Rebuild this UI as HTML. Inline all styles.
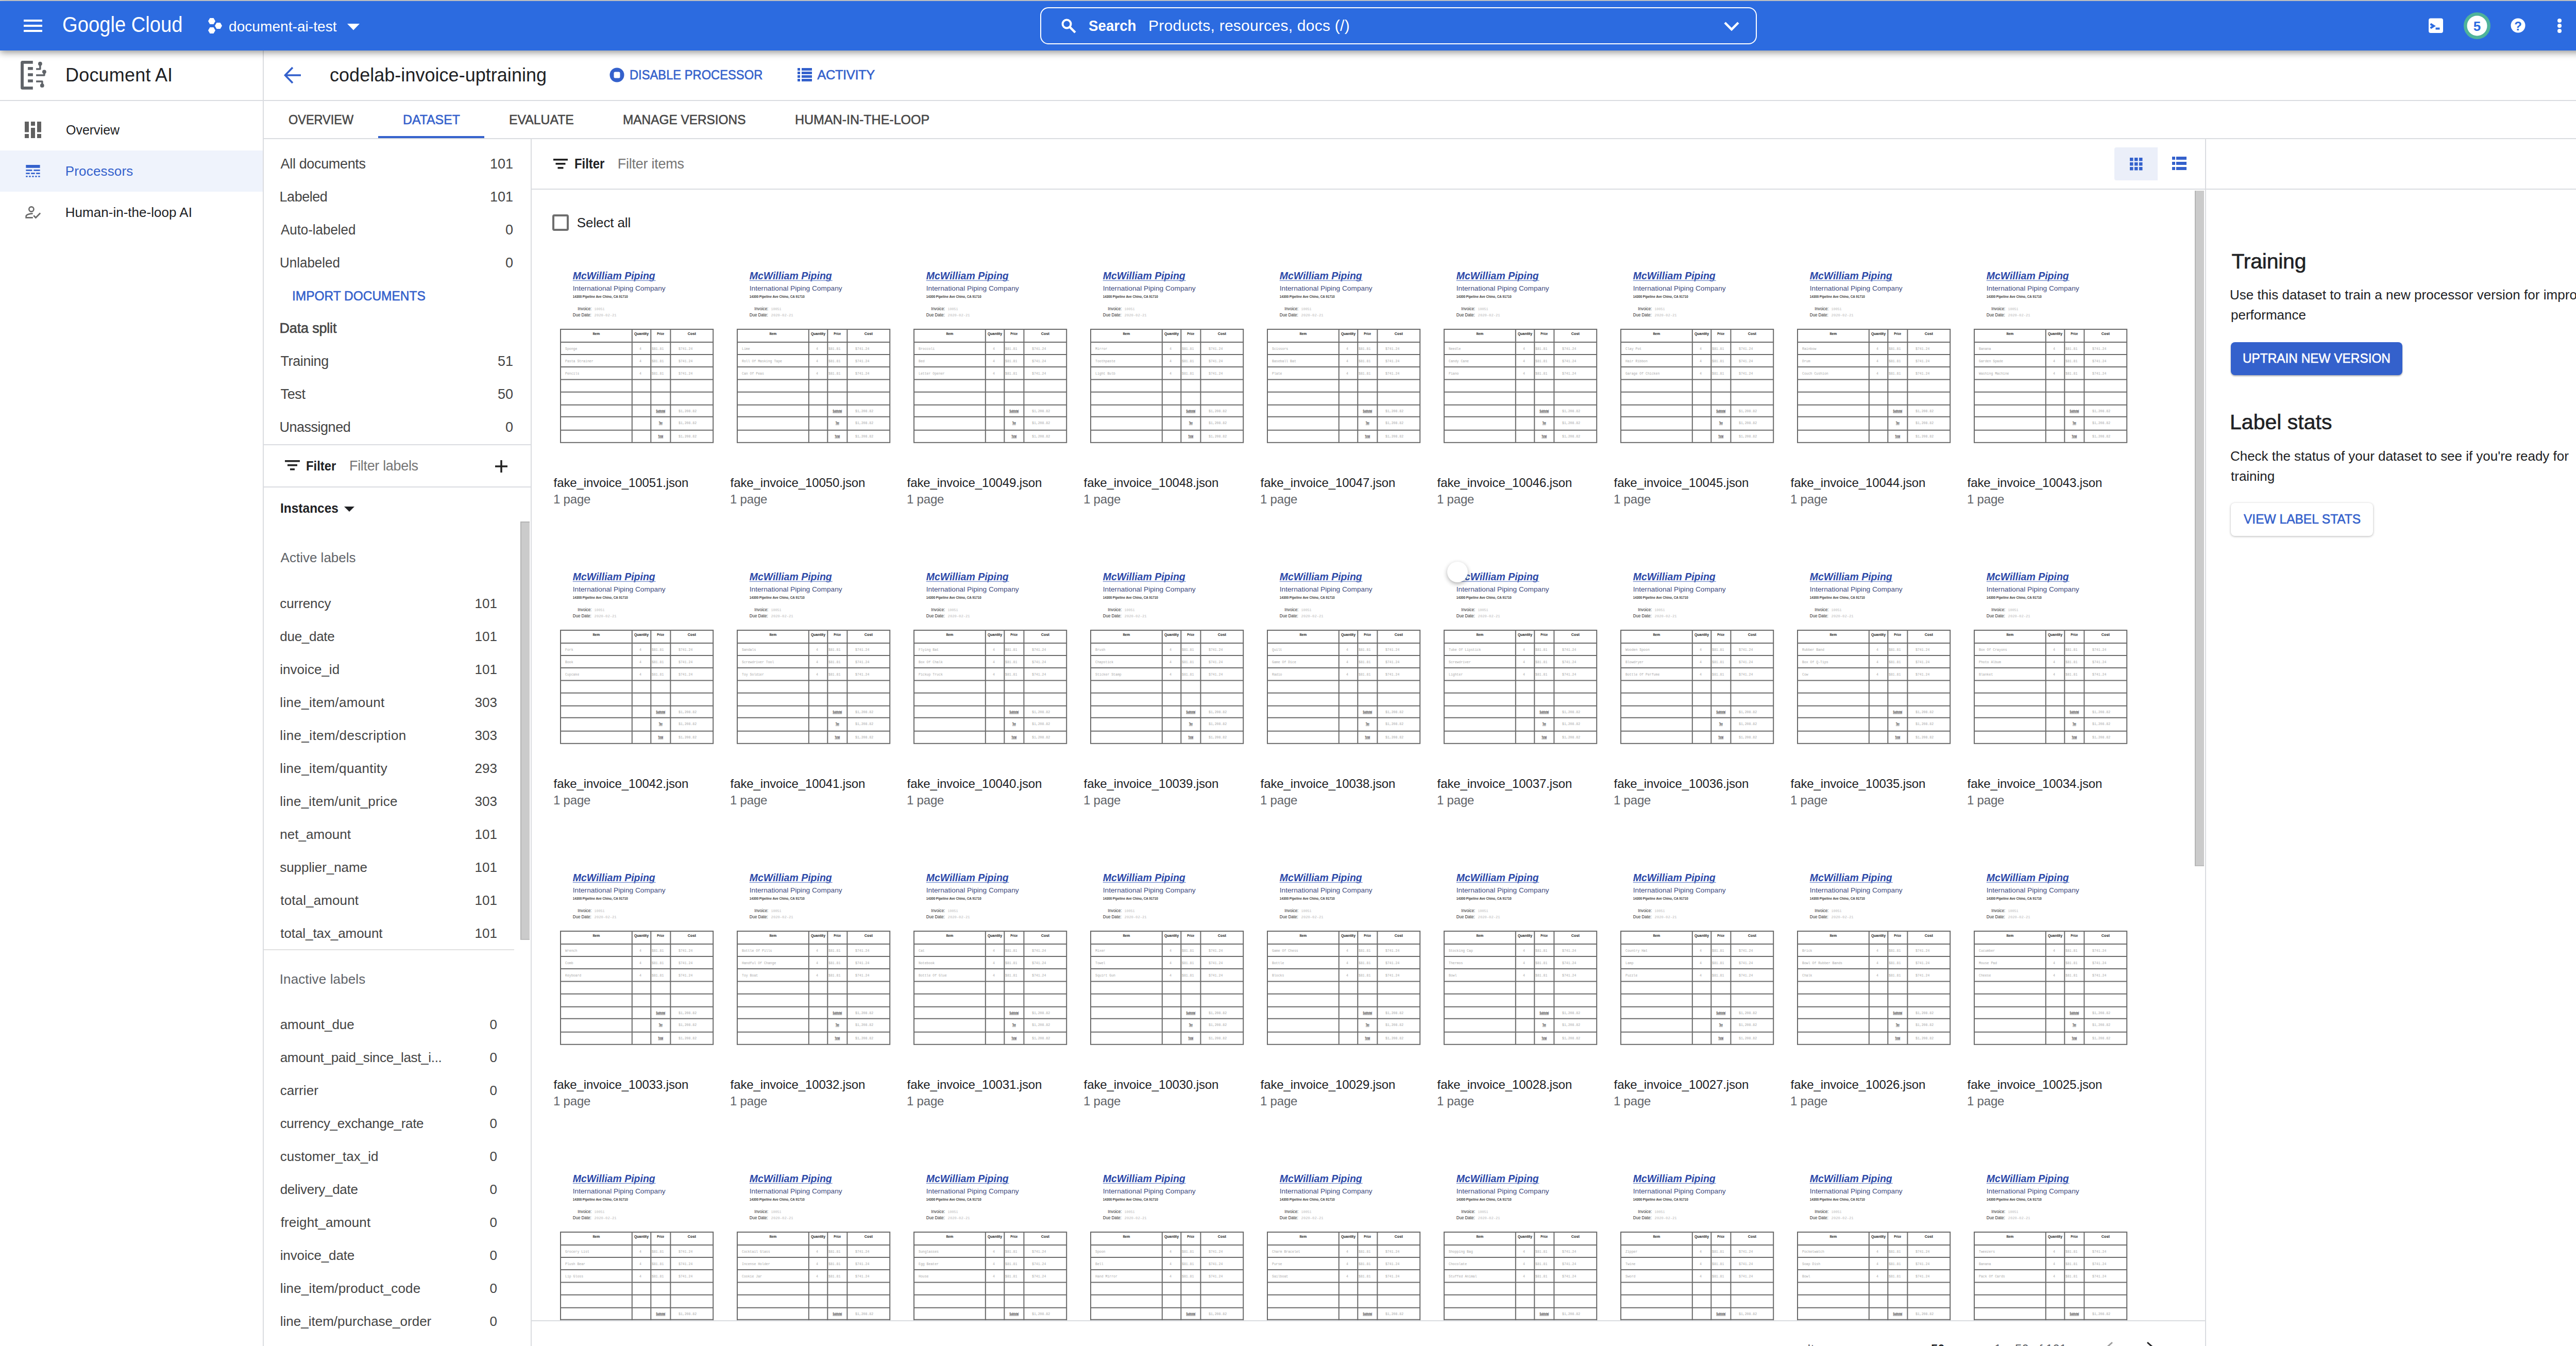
<!DOCTYPE html>
<html><head><meta charset="utf-8"><title>Document AI</title>
<style>
html,body{margin:0;padding:0;background:#fff;}
body{width:5120px;height:2612px;overflow:hidden;position:relative;font-family:"Liberation Sans",sans-serif;}
.t{position:absolute;white-space:nowrap;}
.r{position:absolute;}
@media (max-width:2600px){body{zoom:0.5;}}

</style></head><body>
<svg width="0" height="0" style="position:absolute"><defs><symbol id="inv" overflow="visible"><text x="23.7" y="-97" font-family="Liberation Sans" font-weight="700" font-style="italic" font-size="19.5" fill="#2b48a8" textLength="160" lengthAdjust="spacingAndGlyphs">McWilliam Piping</text><rect x="23.7" y="-95.3" width="161" height="1.4" fill="#7f95d0"/><text x="23.7" y="-74.8" font-family="Liberation Sans" font-size="13" fill="#3f4c80" textLength="180" lengthAdjust="spacingAndGlyphs">International Piping Company</text><text x="23.7" y="-60.6" font-family="Liberation Sans" font-size="7.5" font-weight="700" fill="#3a3a3a" textLength="107" lengthAdjust="spacingAndGlyphs">14300 Pipeline Ave Chino, CA 91710</text><text x="33.3" y="-37.2" font-family="Liberation Sans" font-size="8.5" fill="#2a2a2a" textLength="27" lengthAdjust="spacingAndGlyphs">Invoice:</text><text x="65.6" y="-37.2" font-family="Liberation Mono" font-size="8" fill="#bbb" textLength="20" lengthAdjust="spacingAndGlyphs">10051</text><text x="23.7" y="-25.4" font-family="Liberation Sans" font-size="8.5" fill="#2a2a2a" textLength="36" lengthAdjust="spacingAndGlyphs">Due Date:</text><text x="65.6" y="-25.4" font-family="Liberation Mono" font-size="8" fill="#bbb" textLength="43" lengthAdjust="spacingAndGlyphs">2020-02-21</text><g stroke="#6a6a6a" stroke-width="2" fill="none"><rect x="0" y="0" width="296.2" height="219.8"/><line x1="0" y1="24.9" x2="296.2" y2="24.9"/><line x1="0" y1="49" x2="296.2" y2="49"/><line x1="0" y1="73" x2="296.2" y2="73"/><line x1="0" y1="97.4" x2="296.2" y2="97.4"/><line x1="0" y1="121.8" x2="296.2" y2="121.8"/><line x1="0" y1="146.7" x2="296.2" y2="146.7"/><line x1="0" y1="169.8" x2="296.2" y2="169.8"/><line x1="0" y1="195.7" x2="296.2" y2="195.7"/><line x1="138.8" y1="0" x2="138.8" y2="219.8"/><line x1="175.3" y1="0" x2="175.3" y2="219.8"/><line x1="213.4" y1="0" x2="213.4" y2="219.8"/></g><text x="69.4" y="11" text-anchor="middle" font-family="Liberation Sans" font-weight="700" font-size="6.5" fill="#222" textLength="14" lengthAdjust="spacingAndGlyphs">Item</text><text x="157" y="11" text-anchor="middle" font-family="Liberation Sans" font-weight="700" font-size="6.5" fill="#222" textLength="28" lengthAdjust="spacingAndGlyphs">Quantity</text><text x="194.3" y="11" text-anchor="middle" font-family="Liberation Sans" font-weight="700" font-size="6.5" fill="#222" textLength="14" lengthAdjust="spacingAndGlyphs">Price</text><text x="254.8" y="11" text-anchor="middle" font-family="Liberation Sans" font-weight="700" font-size="6.5" fill="#222" textLength="16" lengthAdjust="spacingAndGlyphs">Cost</text><text x="153" y="39.9" font-family="Liberation Mono" font-size="6.5" fill="#aaa">4</text><text x="177" y="39.9" font-family="Liberation Mono" font-size="6.5" fill="#aaa">$81.81</text><text x="229" y="39.9" font-family="Liberation Mono" font-size="6.5" fill="#aaa">$741.24</text><text x="153" y="64" font-family="Liberation Mono" font-size="6.5" fill="#aaa">4</text><text x="177" y="64" font-family="Liberation Mono" font-size="6.5" fill="#aaa">$81.81</text><text x="229" y="64" font-family="Liberation Mono" font-size="6.5" fill="#aaa">$741.24</text><text x="153" y="88" font-family="Liberation Mono" font-size="6.5" fill="#aaa">4</text><text x="177" y="88" font-family="Liberation Mono" font-size="6.5" fill="#aaa">$81.81</text><text x="229" y="88" font-family="Liberation Mono" font-size="6.5" fill="#aaa">$741.24</text><text x="194.3" y="160.7" text-anchor="middle" font-family="Liberation Sans" font-weight="700" font-size="6.5" fill="#444" text-decoration="underline" textLength="18" lengthAdjust="spacingAndGlyphs">Subtotal</text><text x="229" y="160.7" font-family="Liberation Mono" font-size="6.5" fill="#aaa">$1,208.82</text><text x="194.3" y="183.8" text-anchor="middle" font-family="Liberation Sans" font-weight="700" font-size="6.5" fill="#444" text-decoration="underline" textLength="7" lengthAdjust="spacingAndGlyphs">Tax</text><text x="229" y="183.8" font-family="Liberation Mono" font-size="6.5" fill="#aaa">$1,208.82</text><text x="194.3" y="209.7" text-anchor="middle" font-family="Liberation Sans" font-weight="700" font-size="6.5" fill="#444" text-decoration="underline" textLength="10" lengthAdjust="spacingAndGlyphs">Total</text><text x="229" y="209.7" font-family="Liberation Mono" font-size="6.5" fill="#aaa">$1,208.82</text></symbol></defs></svg>
<div class="r" style="left:0px;top:0px;width:5120px;height:2px;background:#d4d4d4;"></div><div class="r" style="left:0px;top:2px;width:5120px;height:96px;background:#2c6be0;box-shadow:0 4px 13px rgba(0,0,0,.42);z-index:5"></div><div class="r" style="left:46px;top:38px;width:36px;height:4px;background:#fff;z-index:6"></div><div class="r" style="left:46px;top:48px;width:36px;height:4px;background:#fff;z-index:6"></div><div class="r" style="left:46px;top:58px;width:36px;height:4px;background:#fff;z-index:6"></div><div class="t" style="left:121.22px;top:25.60px;font-size:43px;line-height:43px;color:#fff;font-weight:400;letter-spacing:0.000px;z-index:6;transform:scaleX(0.8880);transform-origin:0 0">Google Cloud</div><svg class="r" style="left:402px;top:34px;z-index:6" width="32" height="32" viewBox="0 0 32 32"><polygon points="16.00,7.00 12.50,13.06 5.50,13.06 2.00,7.00 5.50,0.94 12.50,0.94" fill="#fff"/><polygon points="29.00,16.00 25.50,22.06 18.50,22.06 15.00,16.00 18.50,9.94 25.50,9.94" fill="#fff"/><polygon points="16.00,25.00 12.50,31.06 5.50,31.06 2.00,25.00 5.50,18.94 12.50,18.94" fill="#fff"/></svg><div class="t" style="left:444.00px;top:37.60px;font-size:28px;line-height:28px;color:#fff;font-weight:400;letter-spacing:0.067px;z-index:6">document-ai-test</div><svg class="r" style="left:674px;top:46px;z-index:6" width="24" height="13" viewBox="0 0 24 13"><polygon points="0,0 24,0 12,12.5" fill="#fff"/></svg><div class="r" style="left:2019px;top:14px;width:1391px;height:72px;background:transparent;box-sizing:border-box;border:2px solid #fff;border-radius:16px;z-index:6"></div><svg class="r" style="left:2058px;top:34px;z-index:6" width="32" height="32" viewBox="0 0 32 32"><circle cx="12.5" cy="12.5" r="8" fill="none" stroke="#fff" stroke-width="4"/><line x1="18.5" y1="18.5" x2="29" y2="29" stroke="#fff" stroke-width="4.5"/></svg><div class="t" style="left:2113.08px;top:34.61px;font-size:30px;line-height:30px;color:#fff;font-weight:700;letter-spacing:0.000px;z-index:6;transform:scaleX(0.9245);transform-origin:0 0">Search</div><div class="t" style="left:2229.00px;top:34.61px;font-size:30px;line-height:30px;color:#fff;font-weight:400;letter-spacing:0.257px;z-index:6">Products, resources, docs (/)</div><svg class="r" style="left:3345px;top:40px;z-index:6" width="32" height="22" viewBox="0 0 32 22"><polyline points="3,4 16,17 29,4" fill="none" stroke="#fff" stroke-width="4.5"/></svg><svg class="r" style="left:4713px;top:35px;z-index:6" width="30" height="30" viewBox="0 0 30 30"><rect x="1" y="0.5" width="28" height="28.5" rx="4" fill="#fff"/><polyline points="4.5,11.5 11,15.5 4.5,19.5" fill="none" stroke="#2c6be0" stroke-width="4"/><rect x="14.5" y="18.5" width="8" height="4" fill="#2c6be0"/></svg><svg class="r" style="left:4782px;top:24px;z-index:6" width="52" height="52" viewBox="0 0 52 52"><circle cx="26" cy="26" r="26" fill="#4fb39a"/><circle cx="26" cy="26" r="19.5" fill="#fff"/><text x="26" y="35.5" text-anchor="middle" font-family="Liberation Sans" font-weight="700" font-size="26" fill="#2c6be0">5</text></svg><svg class="r" style="left:4873px;top:35px;z-index:6" width="30" height="30" viewBox="0 0 30 30"><circle cx="14.5" cy="14.5" r="14" fill="#fff"/><text x="14.5" y="23.5" text-anchor="middle" font-family="Liberation Sans" font-weight="700" font-size="24" fill="#2c6be0">?</text></svg><svg class="r" style="left:4960px;top:34px;z-index:6" width="16" height="32" viewBox="0 0 16 32"><circle cx="8" cy="6" r="4" fill="#fff"/><circle cx="8" cy="16" r="4" fill="#fff"/><circle cx="8" cy="26" r="4" fill="#fff"/></svg><svg class="r" style="left:5015px;top:17px;z-index:6" width="66" height="66" viewBox="0 0 66 66"><defs><clipPath id="av"><circle cx="33" cy="33" r="32"/></clipPath></defs><g clip-path="url(#av)"><rect width="66" height="66" fill="#fff"/><path d="M6,54 C13,50 18,48 22,47 C27,52 35,54 43,50 C50,52 56,55 62,58 L62,66 L6,66 Z" fill="#6dc4ad"/><path d="M22,38 L41,38 L43,50 C35,54 27,52 22,47 Z" fill="#b99383"/><ellipse cx="37" cy="29" rx="13" ry="16" fill="#dcab94"/><path d="M19.5,25 C18,12 25,4 36,3.5 C45,3.5 51,10 49.5,23 L47.5,24 C46,16 41,13.5 34,14 C27,14.5 23,18 22.5,26 Z" fill="#4b362b"/><rect x="24" y="23.5" width="11" height="6" fill="none" stroke="#3a2c25" stroke-width="1.6"/><rect x="37" y="23.5" width="11" height="6" fill="none" stroke="#3a2c25" stroke-width="1.6"/><path d="M31,34.5 Q37,38.5 42,34.5 L41,37 Q37,40 32,37 Z" fill="#f1e6df" stroke="#5a3a30" stroke-width="0.8"/></g></svg><div class="r" style="left:510px;top:98px;width:2px;height:2514px;background:#dadce0;"></div><div class="r" style="left:0px;top:194px;width:5120px;height:2px;background:#dadce0;"></div><svg class="r" style="left:38px;top:116px;" width="54" height="60" viewBox="0 0 54 60"><g fill="#5f6368"><path d="M25.8,2.1 H5.6 Q2.1,2.1 2.1,5.6 V54.2 Q2.1,57.7 5.6,57.7 H25.8 V52 H8 V7.7 H25.8 Z"/><rect x="16.1" y="14.1" width="9.8" height="5.6"/><rect x="16.1" y="26.2" width="9.8" height="5.6"/><rect x="16.1" y="38.2" width="9.8" height="5.6"/><circle cx="39.9" cy="7.7" r="3.9"/><circle cx="47.9" cy="23.3" r="3.9"/><circle cx="43.8" cy="49.9" r="3.9"/></g><g fill="none" stroke="#5f6368" stroke-width="3.5" stroke-linejoin="round"><polyline points="32.1,17.9 39.9,17.9 39.9,7.7"/><polyline points="32.1,30 47.9,30 47.9,23.3"/><polyline points="32.1,42 43.9,42 43.9,49.9"/></g></svg><div class="t" style="left:127.00px;top:127.53px;font-size:36px;line-height:36px;color:#202124;font-weight:400;letter-spacing:0.200px;">Document AI</div><svg class="r" style="left:48px;top:236px;" width="32" height="32" viewBox="0 0 32 32"><g fill="#616161"><rect x="0" y="0" width="8" height="20.5"/><rect x="0" y="24" width="8" height="8"/><rect x="12" y="0" width="8" height="8"/><rect x="12" y="12" width="8" height="20"/><rect x="24" y="0" width="8" height="20.5"/><rect x="24" y="24" width="8" height="8"/></g></svg><div class="t" style="left:127.84px;top:238.59px;font-size:26px;line-height:26px;color:#202124;font-weight:400;letter-spacing:0.000px;;transform:scaleX(0.9602);transform-origin:0 0">Overview</div><div class="r" style="left:0px;top:292px;width:510px;height:80px;background:#eff3fc;"></div><svg class="r" style="left:50px;top:320px;" width="28" height="24" viewBox="0 0 28 24"><g fill="#3461cc"><rect x="0.3" y="0" width="27.3" height="5.8"/><rect x="0.3" y="9.1" width="12.1" height="2.7"/><rect x="15.4" y="9.1" width="12.2" height="2.7"/><rect x="0.3" y="15.1" width="7.5" height="2.7"/><rect x="10.2" y="15.1" width="7.5" height="2.7"/><rect x="20.2" y="15.1" width="7.4" height="2.7"/><rect x="0.3" y="21.1" width="3.3" height="2.6"/><rect x="6.3" y="21.1" width="3.3" height="2.6"/><rect x="12.3" y="21.1" width="3.3" height="2.6"/><rect x="18.3" y="21.1" width="3.3" height="2.6"/><rect x="24.3" y="21.1" width="3.3" height="2.6"/></g></svg><div class="t" style="left:126.80px;top:318.69px;font-size:26px;line-height:26px;color:#3461cc;font-weight:400;letter-spacing:0.156px;">Processors</div><svg class="r" style="left:40px;top:390px;" width="50" height="42" viewBox="0 0 50 42"><g fill="none" stroke="#696969" stroke-width="2.6"><circle cx="20.9" cy="16" r="4.6"/><path d="M23.6,24.4 C17,24.6 10.6,26.8 10.6,29.8 V32.4 H23.8"/></g><polyline points="25.2,28.2 29.4,32.4 38.2,23.6" fill="none" stroke="#696969" stroke-width="2.8"/></svg><div class="t" style="left:126.80px;top:398.99px;font-size:26px;line-height:26px;color:#202124;font-weight:400;letter-spacing:0.021px;">Human-in-the-loop AI</div><svg class="r" style="left:550px;top:128px;" width="36" height="36" viewBox="0 0 36 36"><g fill="none" stroke="#3461cc" stroke-width="3.6"><line x1="4" y1="18" x2="34" y2="18"/><polyline points="18,3 3.5,18 18,33"/></g></svg><div class="t" style="left:640.00px;top:127.93px;font-size:36px;line-height:36px;color:#202124;font-weight:400;letter-spacing:0.032px;">codelab-invoice-uptraining</div><svg class="r" style="left:1183px;top:131px;" width="30" height="30" viewBox="0 0 30 30"><circle cx="14.5" cy="14.5" r="14" fill="#3461cc"/><rect x="8.5" y="8.5" width="12" height="12" rx="2.5" fill="#fff"/></svg><div class="t" style="left:1221.74px;top:133.31px;font-size:25.5px;line-height:25.5px;color:#3461cc;font-weight:400;-webkit-text-stroke:0.6px #3461cc;letter-spacing:0.000px;;transform:scaleX(0.9298);transform-origin:0 0">DISABLE PROCESSOR</div><svg class="r" style="left:1548px;top:132px;" width="28" height="26" viewBox="0 0 28 26"><g fill="#3461cc"><rect x="0" y="0" width="5" height="5"/><rect x="8" y="0" width="20" height="5"/><rect x="0" y="7" width="5" height="5"/><rect x="8" y="7" width="20" height="5"/><rect x="0" y="14" width="5" height="5"/><rect x="8" y="14" width="20" height="5"/><rect x="0" y="21" width="5" height="5"/><rect x="8" y="21" width="20" height="5"/></g></svg><div class="t" style="left:1586.30px;top:133.31px;font-size:25.5px;line-height:25.5px;color:#3461cc;font-weight:400;-webkit-text-stroke:0.6px #3461cc;letter-spacing:-0.400px;">ACTIVITY</div><div class="r" style="left:512px;top:268px;width:4608px;height:2px;background:#dadce0;"></div><div class="t" style="left:559.60px;top:219.29px;font-size:26px;line-height:26px;color:#474747;font-weight:400;-webkit-text-stroke:0.6px #474747;letter-spacing:0.000px;;transform:scaleX(0.9029);transform-origin:0 0">OVERVIEW</div><div class="t" style="left:782.09px;top:219.29px;font-size:26px;line-height:26px;color:#3461cc;font-weight:400;-webkit-text-stroke:0.6px #3461cc;letter-spacing:0.000px;;transform:scaleX(0.9561);transform-origin:0 0">DATASET</div><div class="t" style="left:988.09px;top:219.29px;font-size:26px;line-height:26px;color:#474747;font-weight:400;-webkit-text-stroke:0.6px #474747;letter-spacing:0.000px;;transform:scaleX(0.9538);transform-origin:0 0">EVALUATE</div><div class="t" style="left:1209.02px;top:219.29px;font-size:26px;line-height:26px;color:#474747;font-weight:400;-webkit-text-stroke:0.6px #474747;letter-spacing:0.000px;;transform:scaleX(0.9377);transform-origin:0 0">MANAGE VERSIONS</div><div class="t" style="left:1542.78px;top:219.29px;font-size:26px;line-height:26px;color:#474747;font-weight:400;-webkit-text-stroke:0.6px #474747;letter-spacing:0.000px;;transform:scaleX(0.9617);transform-origin:0 0">HUMAN-IN-THE-LOOP</div><div class="r" style="left:734px;top:264px;width:206px;height:4px;background:#3461cc;"></div><div class="r" style="left:1030px;top:270px;width:2px;height:2342px;background:#dadce0;"></div><div class="t" style="left:544.60px;top:304.54px;font-size:27px;line-height:27px;color:#444444;font-weight:400;letter-spacing:-0.350px;">All documents</div><div class="t" style="right:4124px;top:304.54px;font-size:27px;line-height:27px;color:#444444;font-weight:400;letter-spacing:0.000px;">101</div><div class="t" style="left:542.60px;top:368.74px;font-size:27px;line-height:27px;color:#444444;font-weight:400;letter-spacing:-0.500px;">Labeled</div><div class="t" style="right:4124px;top:368.74px;font-size:27px;line-height:27px;color:#444444;font-weight:400;letter-spacing:0.000px;">101</div><div class="t" style="left:544.60px;top:432.64px;font-size:27px;line-height:27px;color:#444444;font-weight:400;letter-spacing:0.000px;;transform:scaleX(0.9587);transform-origin:0 0">Auto-labeled</div><div class="t" style="right:4124px;top:432.64px;font-size:27px;line-height:27px;color:#444444;font-weight:400;letter-spacing:0.000px;">0</div><div class="t" style="left:542.68px;top:496.64px;font-size:27px;line-height:27px;color:#444444;font-weight:400;letter-spacing:0.000px;;transform:scaleX(0.9619);transform-origin:0 0">Unlabeled</div><div class="t" style="right:4124px;top:496.64px;font-size:27px;line-height:27px;color:#444444;font-weight:400;letter-spacing:0.000px;">0</div><div class="t" style="left:566.58px;top:561.81px;font-size:25.5px;line-height:25.5px;color:#3461cc;font-weight:400;-webkit-text-stroke:0.6px #3461cc;letter-spacing:0.000px;;transform:scaleX(0.9596);transform-origin:0 0">IMPORT DOCUMENTS</div><div class="t" style="left:542.50px;top:624.44px;font-size:27px;line-height:27px;color:#444444;font-weight:400;-webkit-text-stroke:0.6px #444444;letter-spacing:-0.178px;">Data split</div><div class="t" style="left:544.50px;top:688.14px;font-size:27px;line-height:27px;color:#444444;font-weight:400;letter-spacing:-0.400px;">Training</div><div class="t" style="right:4124px;top:688.14px;font-size:27px;line-height:27px;color:#444444;font-weight:400;letter-spacing:0.000px;">51</div><div class="t" style="left:544.50px;top:752.14px;font-size:27px;line-height:27px;color:#444444;font-weight:400;letter-spacing:-0.333px;">Test</div><div class="t" style="right:4124px;top:752.14px;font-size:27px;line-height:27px;color:#444444;font-weight:400;letter-spacing:0.000px;">50</div><div class="t" style="left:542.50px;top:816.14px;font-size:27px;line-height:27px;color:#444444;font-weight:400;letter-spacing:-0.489px;">Unassigned</div><div class="t" style="right:4124px;top:816.14px;font-size:27px;line-height:27px;color:#444444;font-weight:400;letter-spacing:0.000px;">0</div><div class="r" style="left:512px;top:862px;width:518px;height:2px;background:#dadce0;"></div><svg class="r" style="left:553px;top:893px;" width="30" height="22" viewBox="0 0 30 22"><g fill="#212121"><rect x="0" y="0" width="29" height="3.5"/><rect x="5" y="8" width="19" height="3.5"/><rect x="10" y="16" width="9" height="3.5"/></g></svg><div class="t" style="left:594.10px;top:891.27px;font-size:26.5px;line-height:26.5px;color:#202124;font-weight:700;letter-spacing:0.000px;;transform:scaleX(0.9000);transform-origin:0 0">Filter</div><div class="t" style="left:678.00px;top:890.84px;font-size:27px;line-height:27px;color:#757575;font-weight:400;letter-spacing:-0.333px;">Filter labels</div><svg class="r" style="left:960px;top:892px;" width="26" height="26" viewBox="0 0 26 26"><g fill="#212121"><rect x="11.25" y="1" width="3.5" height="24"/><rect x="1" y="11.25" width="24" height="3.5"/></g></svg><div class="r" style="left:512px;top:944px;width:518px;height:2px;background:#dadce0;"></div><div class="t" style="left:544.46px;top:972.79px;font-size:26px;line-height:26px;color:#202124;font-weight:700;letter-spacing:0.000px;;transform:scaleX(0.9415);transform-origin:0 0">Instances</div><svg class="r" style="left:668px;top:983px;" width="20" height="12" viewBox="0 0 20 12"><polygon points="0,0 20,0 10,10" fill="#202124"/></svg><div class="t" style="left:544.60px;top:1068.99px;font-size:26px;line-height:26px;color:#5f6368;font-weight:400;letter-spacing:0.000px;">Active labels</div><div class="t" style="left:543.30px;top:1157.59px;font-size:26px;line-height:26px;color:#444444;font-weight:400;letter-spacing:-0.086px;">currency</div><div class="t" style="right:4155px;top:1157.59px;font-size:26px;line-height:26px;color:#444444;font-weight:400;letter-spacing:0.000px;">101</div><div class="t" style="left:543.30px;top:1221.59px;font-size:26px;line-height:26px;color:#444444;font-weight:400;letter-spacing:-0.286px;">due_date</div><div class="t" style="right:4155px;top:1221.59px;font-size:26px;line-height:26px;color:#444444;font-weight:400;letter-spacing:0.000px;">101</div><div class="t" style="left:543.30px;top:1285.59px;font-size:26px;line-height:26px;color:#444444;font-weight:400;letter-spacing:0.022px;">invoice_id</div><div class="t" style="right:4155px;top:1285.59px;font-size:26px;line-height:26px;color:#444444;font-weight:400;letter-spacing:0.000px;">101</div><div class="t" style="left:543.30px;top:1349.59px;font-size:26px;line-height:26px;color:#444444;font-weight:400;letter-spacing:0.333px;">line_item/amount</div><div class="t" style="right:4155px;top:1349.59px;font-size:26px;line-height:26px;color:#444444;font-weight:400;letter-spacing:0.000px;">303</div><div class="t" style="left:543.30px;top:1413.59px;font-size:26px;line-height:26px;color:#444444;font-weight:400;letter-spacing:0.400px;">line_item/description</div><div class="t" style="right:4155px;top:1413.59px;font-size:26px;line-height:26px;color:#444444;font-weight:400;letter-spacing:0.000px;">303</div><div class="t" style="left:543.30px;top:1477.59px;font-size:26px;line-height:26px;color:#444444;font-weight:400;letter-spacing:0.353px;">line_item/quantity</div><div class="t" style="right:4155px;top:1477.59px;font-size:26px;line-height:26px;color:#444444;font-weight:400;letter-spacing:0.000px;">293</div><div class="t" style="left:543.30px;top:1541.59px;font-size:26px;line-height:26px;color:#444444;font-weight:400;letter-spacing:0.221px;">line_item/unit_price</div><div class="t" style="right:4155px;top:1541.59px;font-size:26px;line-height:26px;color:#444444;font-weight:400;letter-spacing:0.000px;">303</div><div class="t" style="left:543.30px;top:1605.59px;font-size:26px;line-height:26px;color:#444444;font-weight:400;letter-spacing:0.044px;">net_amount</div><div class="t" style="right:4155px;top:1605.59px;font-size:26px;line-height:26px;color:#444444;font-weight:400;letter-spacing:0.000px;">101</div><div class="t" style="left:543.30px;top:1669.59px;font-size:26px;line-height:26px;color:#444444;font-weight:400;letter-spacing:-0.067px;">supplier_name</div><div class="t" style="right:4155px;top:1669.59px;font-size:26px;line-height:26px;color:#444444;font-weight:400;letter-spacing:0.000px;">101</div><div class="t" style="left:544.30px;top:1733.59px;font-size:26px;line-height:26px;color:#444444;font-weight:400;letter-spacing:0.127px;">total_amount</div><div class="t" style="right:4155px;top:1733.59px;font-size:26px;line-height:26px;color:#444444;font-weight:400;letter-spacing:0.000px;">101</div><div class="t" style="left:544.30px;top:1797.59px;font-size:26px;line-height:26px;color:#444444;font-weight:400;letter-spacing:-0.080px;">total_tax_amount</div><div class="t" style="right:4155px;top:1797.59px;font-size:26px;line-height:26px;color:#444444;font-weight:400;letter-spacing:0.000px;">101</div><div class="r" style="left:512px;top:1842px;width:486px;height:2px;background:#e0e0e0;"></div><div class="t" style="left:542.70px;top:1887.29px;font-size:26px;line-height:26px;color:#5f6368;font-weight:400;letter-spacing:0.129px;">Inactive labels</div><div class="t" style="left:543.70px;top:1975.49px;font-size:26px;line-height:26px;color:#444444;font-weight:400;letter-spacing:-0.067px;">amount_due</div><div class="t" style="right:4155px;top:1975.49px;font-size:26px;line-height:26px;color:#444444;font-weight:400;letter-spacing:0.000px;">0</div><div class="t" style="left:543.70px;top:2039.49px;font-size:26px;line-height:26px;color:#444444;font-weight:400;letter-spacing:-0.315px;">amount_paid_since_last_i...</div><div class="t" style="right:4155px;top:2039.49px;font-size:26px;line-height:26px;color:#444444;font-weight:400;letter-spacing:0.000px;">0</div><div class="t" style="left:543.70px;top:2103.49px;font-size:26px;line-height:26px;color:#444444;font-weight:400;letter-spacing:0.100px;">carrier</div><div class="t" style="right:4155px;top:2103.49px;font-size:26px;line-height:26px;color:#444444;font-weight:400;letter-spacing:0.000px;">0</div><div class="t" style="left:543.70px;top:2167.49px;font-size:26px;line-height:26px;color:#444444;font-weight:400;letter-spacing:-0.352px;">currency_exchange_rate</div><div class="t" style="right:4155px;top:2167.49px;font-size:26px;line-height:26px;color:#444444;font-weight:400;letter-spacing:0.000px;">0</div><div class="t" style="left:543.70px;top:2231.49px;font-size:26px;line-height:26px;color:#444444;font-weight:400;letter-spacing:0.000px;">customer_tax_id</div><div class="t" style="right:4155px;top:2231.49px;font-size:26px;line-height:26px;color:#444444;font-weight:400;letter-spacing:0.000px;">0</div><div class="t" style="left:543.70px;top:2295.49px;font-size:26px;line-height:26px;color:#444444;font-weight:400;letter-spacing:-0.283px;">delivery_date</div><div class="t" style="right:4155px;top:2295.49px;font-size:26px;line-height:26px;color:#444444;font-weight:400;letter-spacing:0.000px;">0</div><div class="t" style="left:544.70px;top:2359.49px;font-size:26px;line-height:26px;color:#444444;font-weight:400;letter-spacing:0.077px;">freight_amount</div><div class="t" style="right:4155px;top:2359.49px;font-size:26px;line-height:26px;color:#444444;font-weight:400;letter-spacing:0.000px;">0</div><div class="t" style="left:543.70px;top:2423.49px;font-size:26px;line-height:26px;color:#444444;font-weight:400;letter-spacing:-0.127px;">invoice_date</div><div class="t" style="right:4155px;top:2423.49px;font-size:26px;line-height:26px;color:#444444;font-weight:400;letter-spacing:0.000px;">0</div><div class="t" style="left:543.70px;top:2487.49px;font-size:26px;line-height:26px;color:#444444;font-weight:400;letter-spacing:0.171px;">line_item/product_code</div><div class="t" style="right:4155px;top:2487.49px;font-size:26px;line-height:26px;color:#444444;font-weight:400;letter-spacing:0.000px;">0</div><div class="t" style="left:543.70px;top:2551.49px;font-size:26px;line-height:26px;color:#444444;font-weight:400;letter-spacing:0.009px;">line_item/purchase_order</div><div class="t" style="right:4155px;top:2551.49px;font-size:26px;line-height:26px;color:#444444;font-weight:400;letter-spacing:0.000px;">0</div><div class="r" style="left:1010px;top:1012px;width:18px;height:812px;background:#cbcbcb;box-sizing:border-box;border-left:2px solid #b3b3b3;border-top:2px solid #b3b3b3;border-bottom:2px solid #bdbdbd"></div><div class="r" style="left:1032px;top:366px;width:4088px;height:2px;background:#dadce0;"></div><svg class="r" style="left:1073px;top:307px;" width="30" height="22" viewBox="0 0 30 22"><g fill="#212121"><rect x="1" y="1" width="28" height="3.6"/><rect x="5.5" y="9" width="19" height="3.6"/><rect x="9.5" y="17" width="11" height="3.6"/></g></svg><div class="t" style="left:1114.52px;top:305.34px;font-size:27px;line-height:27px;color:#202124;font-weight:700;letter-spacing:0.000px;;transform:scaleX(0.8846);transform-origin:0 0">Filter</div><div class="t" style="left:1198.80px;top:305.14px;font-size:27px;line-height:27px;color:#757575;font-weight:400;letter-spacing:-0.255px;">Filter items</div><div class="r" style="left:4104px;top:286px;width:84px;height:64px;background:#ebeff9;border-radius:4px 0 0 4px"></div><svg class="r" style="left:4133px;top:305px;" width="28" height="28" viewBox="0 0 28 28"><g fill="#3461cc"><rect x="1" y="1" width="6.5" height="6.5"/><rect x="1" y="10" width="6.5" height="6.5"/><rect x="1" y="19" width="6.5" height="6.5"/><rect x="10" y="1" width="6.5" height="6.5"/><rect x="10" y="10" width="6.5" height="6.5"/><rect x="10" y="19" width="6.5" height="6.5"/><rect x="19" y="1" width="6.5" height="6.5"/><rect x="19" y="10" width="6.5" height="6.5"/><rect x="19" y="19" width="6.5" height="6.5"/></g></svg><svg class="r" style="left:4214px;top:302px;" width="32" height="30" viewBox="0 0 32 30"><g fill="#3461cc"><rect x="2" y="2" width="6" height="6"/><rect x="10" y="2" width="20" height="6"/><rect x="2" y="12" width="6" height="6"/><rect x="10" y="12" width="20" height="6"/><rect x="2" y="22" width="6" height="6"/><rect x="10" y="22" width="20" height="6"/></g></svg><div class="r" style="left:4280px;top:270px;width:2px;height:2342px;background:#dadce0;"></div><div class="r" style="left:1032px;top:368px;width:3248px;height:2194px;overflow:hidden"><div class="r" style="left:40px;top:48px;width:32px;height:32px;background:transparent;box-sizing:border-box;border:4px solid #6e6e6e;border-radius:4px"></div><div class="t" style="left:87.80px;top:51.29px;font-size:26px;line-height:26px;color:#202124;font-weight:400;letter-spacing:-0.111px;">Select all</div><svg class="r th" style="left:42.0px;top:151.2px" width="324" height="350" viewBox="-14 -120 324 350"><use href="#inv"/><text x="9" y="39.9" font-family="Liberation Mono" font-size="6.5" fill="#aaa">Sponge</text><text x="9" y="64" font-family="Liberation Mono" font-size="6.5" fill="#aaa">Pasta Strainer</text><text x="9" y="88" font-family="Liberation Mono" font-size="6.5" fill="#aaa">Pencils</text></svg><div class="t" style="left:42.60px;top:557.08px;font-size:24px;line-height:24px;color:#202124;font-weight:400;letter-spacing:-0.109px;">fake_invoice_10051.json</div><div class="t" style="left:42.00px;top:589.08px;font-size:24px;line-height:24px;color:#5f6368;font-weight:400;letter-spacing:-0.200px;">1 page</div><svg class="r th" style="left:385.0px;top:151.2px" width="324" height="350" viewBox="-14 -120 324 350"><use href="#inv"/><text x="9" y="39.9" font-family="Liberation Mono" font-size="6.5" fill="#aaa">Lime</text><text x="9" y="64" font-family="Liberation Mono" font-size="6.5" fill="#aaa">Roll Of Masking Tape</text><text x="9" y="88" font-family="Liberation Mono" font-size="6.5" fill="#aaa">Can Of Peas</text></svg><div class="t" style="left:385.60px;top:557.08px;font-size:24px;line-height:24px;color:#202124;font-weight:400;letter-spacing:-0.109px;">fake_invoice_10050.json</div><div class="t" style="left:385.00px;top:589.08px;font-size:24px;line-height:24px;color:#5f6368;font-weight:400;letter-spacing:-0.200px;">1 page</div><svg class="r th" style="left:728.0px;top:151.2px" width="324" height="350" viewBox="-14 -120 324 350"><use href="#inv"/><text x="9" y="39.9" font-family="Liberation Mono" font-size="6.5" fill="#aaa">Broccoli</text><text x="9" y="64" font-family="Liberation Mono" font-size="6.5" fill="#aaa">Bed</text><text x="9" y="88" font-family="Liberation Mono" font-size="6.5" fill="#aaa">Letter Opener</text></svg><div class="t" style="left:728.60px;top:557.08px;font-size:24px;line-height:24px;color:#202124;font-weight:400;letter-spacing:-0.109px;">fake_invoice_10049.json</div><div class="t" style="left:728.00px;top:589.08px;font-size:24px;line-height:24px;color:#5f6368;font-weight:400;letter-spacing:-0.200px;">1 page</div><svg class="r th" style="left:1071.0px;top:151.2px" width="324" height="350" viewBox="-14 -120 324 350"><use href="#inv"/><text x="9" y="39.9" font-family="Liberation Mono" font-size="6.5" fill="#aaa">Mirror</text><text x="9" y="64" font-family="Liberation Mono" font-size="6.5" fill="#aaa">Toothpaste</text><text x="9" y="88" font-family="Liberation Mono" font-size="6.5" fill="#aaa">Light Bulb</text></svg><div class="t" style="left:1071.60px;top:557.08px;font-size:24px;line-height:24px;color:#202124;font-weight:400;letter-spacing:-0.109px;">fake_invoice_10048.json</div><div class="t" style="left:1071.00px;top:589.08px;font-size:24px;line-height:24px;color:#5f6368;font-weight:400;letter-spacing:-0.200px;">1 page</div><svg class="r th" style="left:1414.0px;top:151.2px" width="324" height="350" viewBox="-14 -120 324 350"><use href="#inv"/><text x="9" y="39.9" font-family="Liberation Mono" font-size="6.5" fill="#aaa">Scissors</text><text x="9" y="64" font-family="Liberation Mono" font-size="6.5" fill="#aaa">Baseball Bat</text><text x="9" y="88" font-family="Liberation Mono" font-size="6.5" fill="#aaa">Plate</text></svg><div class="t" style="left:1414.60px;top:557.08px;font-size:24px;line-height:24px;color:#202124;font-weight:400;letter-spacing:-0.109px;">fake_invoice_10047.json</div><div class="t" style="left:1414.00px;top:589.08px;font-size:24px;line-height:24px;color:#5f6368;font-weight:400;letter-spacing:-0.200px;">1 page</div><svg class="r th" style="left:1757.0px;top:151.2px" width="324" height="350" viewBox="-14 -120 324 350"><use href="#inv"/><text x="9" y="39.9" font-family="Liberation Mono" font-size="6.5" fill="#aaa">Needle</text><text x="9" y="64" font-family="Liberation Mono" font-size="6.5" fill="#aaa">Candy Cane</text><text x="9" y="88" font-family="Liberation Mono" font-size="6.5" fill="#aaa">Piano</text></svg><div class="t" style="left:1757.60px;top:557.08px;font-size:24px;line-height:24px;color:#202124;font-weight:400;letter-spacing:-0.109px;">fake_invoice_10046.json</div><div class="t" style="left:1757.00px;top:589.08px;font-size:24px;line-height:24px;color:#5f6368;font-weight:400;letter-spacing:-0.200px;">1 page</div><svg class="r th" style="left:2100.0px;top:151.2px" width="324" height="350" viewBox="-14 -120 324 350"><use href="#inv"/><text x="9" y="39.9" font-family="Liberation Mono" font-size="6.5" fill="#aaa">Clay Pot</text><text x="9" y="64" font-family="Liberation Mono" font-size="6.5" fill="#aaa">Hair Ribbon</text><text x="9" y="88" font-family="Liberation Mono" font-size="6.5" fill="#aaa">Garage Of Chicken</text></svg><div class="t" style="left:2100.60px;top:557.08px;font-size:24px;line-height:24px;color:#202124;font-weight:400;letter-spacing:-0.109px;">fake_invoice_10045.json</div><div class="t" style="left:2100.00px;top:589.08px;font-size:24px;line-height:24px;color:#5f6368;font-weight:400;letter-spacing:-0.200px;">1 page</div><svg class="r th" style="left:2443.0px;top:151.2px" width="324" height="350" viewBox="-14 -120 324 350"><use href="#inv"/><text x="9" y="39.9" font-family="Liberation Mono" font-size="6.5" fill="#aaa">Rainbow</text><text x="9" y="64" font-family="Liberation Mono" font-size="6.5" fill="#aaa">Drum</text><text x="9" y="88" font-family="Liberation Mono" font-size="6.5" fill="#aaa">Couch Cushion</text></svg><div class="t" style="left:2443.60px;top:557.08px;font-size:24px;line-height:24px;color:#202124;font-weight:400;letter-spacing:-0.109px;">fake_invoice_10044.json</div><div class="t" style="left:2443.00px;top:589.08px;font-size:24px;line-height:24px;color:#5f6368;font-weight:400;letter-spacing:-0.200px;">1 page</div><svg class="r th" style="left:2786.0px;top:151.2px" width="324" height="350" viewBox="-14 -120 324 350"><use href="#inv"/><text x="9" y="39.9" font-family="Liberation Mono" font-size="6.5" fill="#aaa">Banana</text><text x="9" y="64" font-family="Liberation Mono" font-size="6.5" fill="#aaa">Garden Spade</text><text x="9" y="88" font-family="Liberation Mono" font-size="6.5" fill="#aaa">Washing Machine</text></svg><div class="t" style="left:2786.60px;top:557.08px;font-size:24px;line-height:24px;color:#202124;font-weight:400;letter-spacing:-0.109px;">fake_invoice_10043.json</div><div class="t" style="left:2786.00px;top:589.08px;font-size:24px;line-height:24px;color:#5f6368;font-weight:400;letter-spacing:-0.200px;">1 page</div><svg class="r th" style="left:42.0px;top:735.2px" width="324" height="350" viewBox="-14 -120 324 350"><use href="#inv"/><text x="9" y="39.9" font-family="Liberation Mono" font-size="6.5" fill="#aaa">Fork</text><text x="9" y="64" font-family="Liberation Mono" font-size="6.5" fill="#aaa">Book</text><text x="9" y="88" font-family="Liberation Mono" font-size="6.5" fill="#aaa">Cupcake</text></svg><div class="t" style="left:42.60px;top:1141.08px;font-size:24px;line-height:24px;color:#202124;font-weight:400;letter-spacing:-0.109px;">fake_invoice_10042.json</div><div class="t" style="left:42.00px;top:1173.08px;font-size:24px;line-height:24px;color:#5f6368;font-weight:400;letter-spacing:-0.200px;">1 page</div><svg class="r th" style="left:385.0px;top:735.2px" width="324" height="350" viewBox="-14 -120 324 350"><use href="#inv"/><text x="9" y="39.9" font-family="Liberation Mono" font-size="6.5" fill="#aaa">Sandals</text><text x="9" y="64" font-family="Liberation Mono" font-size="6.5" fill="#aaa">Screwdriver Tool</text><text x="9" y="88" font-family="Liberation Mono" font-size="6.5" fill="#aaa">Toy Soldier</text></svg><div class="t" style="left:385.60px;top:1141.08px;font-size:24px;line-height:24px;color:#202124;font-weight:400;letter-spacing:-0.109px;">fake_invoice_10041.json</div><div class="t" style="left:385.00px;top:1173.08px;font-size:24px;line-height:24px;color:#5f6368;font-weight:400;letter-spacing:-0.200px;">1 page</div><svg class="r th" style="left:728.0px;top:735.2px" width="324" height="350" viewBox="-14 -120 324 350"><use href="#inv"/><text x="9" y="39.9" font-family="Liberation Mono" font-size="6.5" fill="#aaa">Flying Bat</text><text x="9" y="64" font-family="Liberation Mono" font-size="6.5" fill="#aaa">Box Of Chalk</text><text x="9" y="88" font-family="Liberation Mono" font-size="6.5" fill="#aaa">Pickup Truck</text></svg><div class="t" style="left:728.60px;top:1141.08px;font-size:24px;line-height:24px;color:#202124;font-weight:400;letter-spacing:-0.109px;">fake_invoice_10040.json</div><div class="t" style="left:728.00px;top:1173.08px;font-size:24px;line-height:24px;color:#5f6368;font-weight:400;letter-spacing:-0.200px;">1 page</div><svg class="r th" style="left:1071.0px;top:735.2px" width="324" height="350" viewBox="-14 -120 324 350"><use href="#inv"/><text x="9" y="39.9" font-family="Liberation Mono" font-size="6.5" fill="#aaa">Brush</text><text x="9" y="64" font-family="Liberation Mono" font-size="6.5" fill="#aaa">Chapstick</text><text x="9" y="88" font-family="Liberation Mono" font-size="6.5" fill="#aaa">Sticker Stamp</text></svg><div class="t" style="left:1071.60px;top:1141.08px;font-size:24px;line-height:24px;color:#202124;font-weight:400;letter-spacing:-0.109px;">fake_invoice_10039.json</div><div class="t" style="left:1071.00px;top:1173.08px;font-size:24px;line-height:24px;color:#5f6368;font-weight:400;letter-spacing:-0.200px;">1 page</div><svg class="r th" style="left:1414.0px;top:735.2px" width="324" height="350" viewBox="-14 -120 324 350"><use href="#inv"/><text x="9" y="39.9" font-family="Liberation Mono" font-size="6.5" fill="#aaa">Quilt</text><text x="9" y="64" font-family="Liberation Mono" font-size="6.5" fill="#aaa">Game Of Dice</text><text x="9" y="88" font-family="Liberation Mono" font-size="6.5" fill="#aaa">Radio</text></svg><div class="t" style="left:1414.60px;top:1141.08px;font-size:24px;line-height:24px;color:#202124;font-weight:400;letter-spacing:-0.109px;">fake_invoice_10038.json</div><div class="t" style="left:1414.00px;top:1173.08px;font-size:24px;line-height:24px;color:#5f6368;font-weight:400;letter-spacing:-0.200px;">1 page</div><svg class="r th" style="left:1757.0px;top:735.2px" width="324" height="350" viewBox="-14 -120 324 350"><use href="#inv"/><text x="9" y="39.9" font-family="Liberation Mono" font-size="6.5" fill="#aaa">Tube Of Lipstick</text><text x="9" y="64" font-family="Liberation Mono" font-size="6.5" fill="#aaa">Screwdriver</text><text x="9" y="88" font-family="Liberation Mono" font-size="6.5" fill="#aaa">Lighter</text></svg><div class="t" style="left:1757.60px;top:1141.08px;font-size:24px;line-height:24px;color:#202124;font-weight:400;letter-spacing:-0.109px;">fake_invoice_10037.json</div><div class="t" style="left:1757.00px;top:1173.08px;font-size:24px;line-height:24px;color:#5f6368;font-weight:400;letter-spacing:-0.200px;">1 page</div><svg class="r th" style="left:2100.0px;top:735.2px" width="324" height="350" viewBox="-14 -120 324 350"><use href="#inv"/><text x="9" y="39.9" font-family="Liberation Mono" font-size="6.5" fill="#aaa">Wooden Spoon</text><text x="9" y="64" font-family="Liberation Mono" font-size="6.5" fill="#aaa">Blowdryer</text><text x="9" y="88" font-family="Liberation Mono" font-size="6.5" fill="#aaa">Bottle Of Perfume</text></svg><div class="t" style="left:2100.60px;top:1141.08px;font-size:24px;line-height:24px;color:#202124;font-weight:400;letter-spacing:-0.109px;">fake_invoice_10036.json</div><div class="t" style="left:2100.00px;top:1173.08px;font-size:24px;line-height:24px;color:#5f6368;font-weight:400;letter-spacing:-0.200px;">1 page</div><svg class="r th" style="left:2443.0px;top:735.2px" width="324" height="350" viewBox="-14 -120 324 350"><use href="#inv"/><text x="9" y="39.9" font-family="Liberation Mono" font-size="6.5" fill="#aaa">Rubber Band</text><text x="9" y="64" font-family="Liberation Mono" font-size="6.5" fill="#aaa">Box Of Q-Tips</text><text x="9" y="88" font-family="Liberation Mono" font-size="6.5" fill="#aaa">Cow</text></svg><div class="t" style="left:2443.60px;top:1141.08px;font-size:24px;line-height:24px;color:#202124;font-weight:400;letter-spacing:-0.109px;">fake_invoice_10035.json</div><div class="t" style="left:2443.00px;top:1173.08px;font-size:24px;line-height:24px;color:#5f6368;font-weight:400;letter-spacing:-0.200px;">1 page</div><svg class="r th" style="left:2786.0px;top:735.2px" width="324" height="350" viewBox="-14 -120 324 350"><use href="#inv"/><text x="9" y="39.9" font-family="Liberation Mono" font-size="6.5" fill="#aaa">Box Of Crayons</text><text x="9" y="64" font-family="Liberation Mono" font-size="6.5" fill="#aaa">Photo Album</text><text x="9" y="88" font-family="Liberation Mono" font-size="6.5" fill="#aaa">Blanket</text></svg><div class="t" style="left:2786.60px;top:1141.08px;font-size:24px;line-height:24px;color:#202124;font-weight:400;letter-spacing:-0.109px;">fake_invoice_10034.json</div><div class="t" style="left:2786.00px;top:1173.08px;font-size:24px;line-height:24px;color:#5f6368;font-weight:400;letter-spacing:-0.200px;">1 page</div><svg class="r th" style="left:42.0px;top:1319.2px" width="324" height="350" viewBox="-14 -120 324 350"><use href="#inv"/><text x="9" y="39.9" font-family="Liberation Mono" font-size="6.5" fill="#aaa">Wrench</text><text x="9" y="64" font-family="Liberation Mono" font-size="6.5" fill="#aaa">Comb</text><text x="9" y="88" font-family="Liberation Mono" font-size="6.5" fill="#aaa">Keyboard</text></svg><div class="t" style="left:42.60px;top:1725.08px;font-size:24px;line-height:24px;color:#202124;font-weight:400;letter-spacing:-0.109px;">fake_invoice_10033.json</div><div class="t" style="left:42.00px;top:1757.08px;font-size:24px;line-height:24px;color:#5f6368;font-weight:400;letter-spacing:-0.200px;">1 page</div><svg class="r th" style="left:385.0px;top:1319.2px" width="324" height="350" viewBox="-14 -120 324 350"><use href="#inv"/><text x="9" y="39.9" font-family="Liberation Mono" font-size="6.5" fill="#aaa">Bottle Of Pills</text><text x="9" y="64" font-family="Liberation Mono" font-size="6.5" fill="#aaa">Handful Of Change</text><text x="9" y="88" font-family="Liberation Mono" font-size="6.5" fill="#aaa">Toy Boat</text></svg><div class="t" style="left:385.60px;top:1725.08px;font-size:24px;line-height:24px;color:#202124;font-weight:400;letter-spacing:-0.109px;">fake_invoice_10032.json</div><div class="t" style="left:385.00px;top:1757.08px;font-size:24px;line-height:24px;color:#5f6368;font-weight:400;letter-spacing:-0.200px;">1 page</div><svg class="r th" style="left:728.0px;top:1319.2px" width="324" height="350" viewBox="-14 -120 324 350"><use href="#inv"/><text x="9" y="39.9" font-family="Liberation Mono" font-size="6.5" fill="#aaa">Cat</text><text x="9" y="64" font-family="Liberation Mono" font-size="6.5" fill="#aaa">Notebook</text><text x="9" y="88" font-family="Liberation Mono" font-size="6.5" fill="#aaa">Bottle Of Glue</text></svg><div class="t" style="left:728.60px;top:1725.08px;font-size:24px;line-height:24px;color:#202124;font-weight:400;letter-spacing:-0.109px;">fake_invoice_10031.json</div><div class="t" style="left:728.00px;top:1757.08px;font-size:24px;line-height:24px;color:#5f6368;font-weight:400;letter-spacing:-0.200px;">1 page</div><svg class="r th" style="left:1071.0px;top:1319.2px" width="324" height="350" viewBox="-14 -120 324 350"><use href="#inv"/><text x="9" y="39.9" font-family="Liberation Mono" font-size="6.5" fill="#aaa">Mixer</text><text x="9" y="64" font-family="Liberation Mono" font-size="6.5" fill="#aaa">Towel</text><text x="9" y="88" font-family="Liberation Mono" font-size="6.5" fill="#aaa">Squirt Gun</text></svg><div class="t" style="left:1071.60px;top:1725.08px;font-size:24px;line-height:24px;color:#202124;font-weight:400;letter-spacing:-0.109px;">fake_invoice_10030.json</div><div class="t" style="left:1071.00px;top:1757.08px;font-size:24px;line-height:24px;color:#5f6368;font-weight:400;letter-spacing:-0.200px;">1 page</div><svg class="r th" style="left:1414.0px;top:1319.2px" width="324" height="350" viewBox="-14 -120 324 350"><use href="#inv"/><text x="9" y="39.9" font-family="Liberation Mono" font-size="6.5" fill="#aaa">Game Of Chess</text><text x="9" y="64" font-family="Liberation Mono" font-size="6.5" fill="#aaa">Bottle</text><text x="9" y="88" font-family="Liberation Mono" font-size="6.5" fill="#aaa">Blocks</text></svg><div class="t" style="left:1414.60px;top:1725.08px;font-size:24px;line-height:24px;color:#202124;font-weight:400;letter-spacing:-0.109px;">fake_invoice_10029.json</div><div class="t" style="left:1414.00px;top:1757.08px;font-size:24px;line-height:24px;color:#5f6368;font-weight:400;letter-spacing:-0.200px;">1 page</div><svg class="r th" style="left:1757.0px;top:1319.2px" width="324" height="350" viewBox="-14 -120 324 350"><use href="#inv"/><text x="9" y="39.9" font-family="Liberation Mono" font-size="6.5" fill="#aaa">Stocking Cap</text><text x="9" y="64" font-family="Liberation Mono" font-size="6.5" fill="#aaa">Thermos</text><text x="9" y="88" font-family="Liberation Mono" font-size="6.5" fill="#aaa">Bowl</text></svg><div class="t" style="left:1757.60px;top:1725.08px;font-size:24px;line-height:24px;color:#202124;font-weight:400;letter-spacing:-0.109px;">fake_invoice_10028.json</div><div class="t" style="left:1757.00px;top:1757.08px;font-size:24px;line-height:24px;color:#5f6368;font-weight:400;letter-spacing:-0.200px;">1 page</div><svg class="r th" style="left:2100.0px;top:1319.2px" width="324" height="350" viewBox="-14 -120 324 350"><use href="#inv"/><text x="9" y="39.9" font-family="Liberation Mono" font-size="6.5" fill="#aaa">Country Hat</text><text x="9" y="64" font-family="Liberation Mono" font-size="6.5" fill="#aaa">Lamp</text><text x="9" y="88" font-family="Liberation Mono" font-size="6.5" fill="#aaa">Puzzle</text></svg><div class="t" style="left:2100.60px;top:1725.08px;font-size:24px;line-height:24px;color:#202124;font-weight:400;letter-spacing:-0.109px;">fake_invoice_10027.json</div><div class="t" style="left:2100.00px;top:1757.08px;font-size:24px;line-height:24px;color:#5f6368;font-weight:400;letter-spacing:-0.200px;">1 page</div><svg class="r th" style="left:2443.0px;top:1319.2px" width="324" height="350" viewBox="-14 -120 324 350"><use href="#inv"/><text x="9" y="39.9" font-family="Liberation Mono" font-size="6.5" fill="#aaa">Brick</text><text x="9" y="64" font-family="Liberation Mono" font-size="6.5" fill="#aaa">Bowl Of Rubber Bands</text><text x="9" y="88" font-family="Liberation Mono" font-size="6.5" fill="#aaa">Chalk</text></svg><div class="t" style="left:2443.60px;top:1725.08px;font-size:24px;line-height:24px;color:#202124;font-weight:400;letter-spacing:-0.109px;">fake_invoice_10026.json</div><div class="t" style="left:2443.00px;top:1757.08px;font-size:24px;line-height:24px;color:#5f6368;font-weight:400;letter-spacing:-0.200px;">1 page</div><svg class="r th" style="left:2786.0px;top:1319.2px" width="324" height="350" viewBox="-14 -120 324 350"><use href="#inv"/><text x="9" y="39.9" font-family="Liberation Mono" font-size="6.5" fill="#aaa">Cucumber</text><text x="9" y="64" font-family="Liberation Mono" font-size="6.5" fill="#aaa">Mouse Pad</text><text x="9" y="88" font-family="Liberation Mono" font-size="6.5" fill="#aaa">Cheese</text></svg><div class="t" style="left:2786.60px;top:1725.08px;font-size:24px;line-height:24px;color:#202124;font-weight:400;letter-spacing:-0.109px;">fake_invoice_10025.json</div><div class="t" style="left:2786.00px;top:1757.08px;font-size:24px;line-height:24px;color:#5f6368;font-weight:400;letter-spacing:-0.200px;">1 page</div><svg class="r th" style="left:42.0px;top:1903.2px" width="324" height="350" viewBox="-14 -120 324 350"><use href="#inv"/><text x="9" y="39.9" font-family="Liberation Mono" font-size="6.5" fill="#aaa">Grocery List</text><text x="9" y="64" font-family="Liberation Mono" font-size="6.5" fill="#aaa">Plush Bear</text><text x="9" y="88" font-family="Liberation Mono" font-size="6.5" fill="#aaa">Lip Gloss</text></svg><svg class="r th" style="left:385.0px;top:1903.2px" width="324" height="350" viewBox="-14 -120 324 350"><use href="#inv"/><text x="9" y="39.9" font-family="Liberation Mono" font-size="6.5" fill="#aaa">Cocktail Glass</text><text x="9" y="64" font-family="Liberation Mono" font-size="6.5" fill="#aaa">Incense Holder</text><text x="9" y="88" font-family="Liberation Mono" font-size="6.5" fill="#aaa">Cookie Jar</text></svg><svg class="r th" style="left:728.0px;top:1903.2px" width="324" height="350" viewBox="-14 -120 324 350"><use href="#inv"/><text x="9" y="39.9" font-family="Liberation Mono" font-size="6.5" fill="#aaa">Sunglasses</text><text x="9" y="64" font-family="Liberation Mono" font-size="6.5" fill="#aaa">Egg Beater</text><text x="9" y="88" font-family="Liberation Mono" font-size="6.5" fill="#aaa">House</text></svg><svg class="r th" style="left:1071.0px;top:1903.2px" width="324" height="350" viewBox="-14 -120 324 350"><use href="#inv"/><text x="9" y="39.9" font-family="Liberation Mono" font-size="6.5" fill="#aaa">Spoon</text><text x="9" y="64" font-family="Liberation Mono" font-size="6.5" fill="#aaa">Bell</text><text x="9" y="88" font-family="Liberation Mono" font-size="6.5" fill="#aaa">Hand Mirror</text></svg><svg class="r th" style="left:1414.0px;top:1903.2px" width="324" height="350" viewBox="-14 -120 324 350"><use href="#inv"/><text x="9" y="39.9" font-family="Liberation Mono" font-size="6.5" fill="#aaa">Charm Bracelet</text><text x="9" y="64" font-family="Liberation Mono" font-size="6.5" fill="#aaa">Purse</text><text x="9" y="88" font-family="Liberation Mono" font-size="6.5" fill="#aaa">Sailboat</text></svg><svg class="r th" style="left:1757.0px;top:1903.2px" width="324" height="350" viewBox="-14 -120 324 350"><use href="#inv"/><text x="9" y="39.9" font-family="Liberation Mono" font-size="6.5" fill="#aaa">Shopping Bag</text><text x="9" y="64" font-family="Liberation Mono" font-size="6.5" fill="#aaa">Chocolate</text><text x="9" y="88" font-family="Liberation Mono" font-size="6.5" fill="#aaa">Stuffed Animal</text></svg><svg class="r th" style="left:2100.0px;top:1903.2px" width="324" height="350" viewBox="-14 -120 324 350"><use href="#inv"/><text x="9" y="39.9" font-family="Liberation Mono" font-size="6.5" fill="#aaa">Zipper</text><text x="9" y="64" font-family="Liberation Mono" font-size="6.5" fill="#aaa">Twine</text><text x="9" y="88" font-family="Liberation Mono" font-size="6.5" fill="#aaa">Sword</text></svg><svg class="r th" style="left:2443.0px;top:1903.2px" width="324" height="350" viewBox="-14 -120 324 350"><use href="#inv"/><text x="9" y="39.9" font-family="Liberation Mono" font-size="6.5" fill="#aaa">Pocketwatch</text><text x="9" y="64" font-family="Liberation Mono" font-size="6.5" fill="#aaa">Soap Dish</text><text x="9" y="88" font-family="Liberation Mono" font-size="6.5" fill="#aaa">Bowl</text></svg><svg class="r th" style="left:2786.0px;top:1903.2px" width="324" height="350" viewBox="-14 -120 324 350"><use href="#inv"/><text x="9" y="39.9" font-family="Liberation Mono" font-size="6.5" fill="#aaa">Tweezers</text><text x="9" y="64" font-family="Liberation Mono" font-size="6.5" fill="#aaa">Banana</text><text x="9" y="88" font-family="Liberation Mono" font-size="6.5" fill="#aaa">Pack Of Cards</text></svg><div class="r" style="left:1777px;top:722px;width:40px;height:40px;background:#fff;border-radius:50%;box-shadow:0 3px 9px rgba(0,0,0,.32)"></div><div class="r" style="left:3228px;top:2px;width:18px;height:1311px;background:#cbcbcb;box-sizing:border-box;border-left:2px solid #b3b3b3;border-bottom:2px solid #bdbdbd"></div></div><div class="r" style="left:1032px;top:2562px;width:3248px;height:2px;background:#dadce0;"></div><div class="t" style="left:3508.00px;top:2606.18px;font-size:24px;line-height:24px;color:#5f6368;font-weight:400;letter-spacing:0.000px;">Items per page:</div><div class="t" style="left:3748.00px;top:2606.18px;font-size:24px;line-height:24px;color:#202124;font-weight:700;letter-spacing:0.000px;">50</div><div class="t" style="left:3871.00px;top:2606.18px;font-size:24px;line-height:24px;color:#5f6368;font-weight:400;letter-spacing:0.000px;">1 – 50 of 101</div><svg class="r" style="left:4088px;top:2603px;" width="14" height="20" viewBox="0 0 14 20"><polyline points="12,2 3,10 12,18" fill="none" stroke="#9e9e9e" stroke-width="3"/></svg><svg class="r" style="left:4166px;top:2603px;" width="14" height="20" viewBox="0 0 14 20"><polyline points="2,2 11,10 2,18" fill="none" stroke="#202124" stroke-width="3"/></svg><div class="t" style="left:4331.50px;top:487.09px;font-size:41px;line-height:41px;color:#202124;font-weight:400;-webkit-text-stroke:0.6px #202124;letter-spacing:-0.229px;">Training</div><div class="t" style="left:4328.00px;top:558.99px;font-size:26px;line-height:26px;color:#202124;font-weight:400;letter-spacing:0.033px;">Use this dataset to train a new processor version for improved</div><div class="t" style="left:4330.00px;top:598.29px;font-size:26px;line-height:26px;color:#202124;font-weight:400;letter-spacing:0.000px;">performance</div><div class="r" style="left:4330px;top:664px;width:333px;height:64px;background:#3461cc;border-radius:8px;box-shadow:0 2px 3px rgba(0,0,0,.3)"></div><div class="t" style="left:4353.09px;top:683.41px;font-size:25.5px;line-height:25.5px;color:#fff;font-weight:400;-webkit-text-stroke:0.6px #fff;letter-spacing:0.000px;;transform:scaleX(0.9554);transform-origin:0 0">UPTRAIN NEW VERSION</div><div class="t" style="left:4328.00px;top:798.89px;font-size:41px;line-height:41px;color:#202124;font-weight:400;-webkit-text-stroke:0.6px #202124;letter-spacing:0.020px;">Label stats</div><div class="t" style="left:4329.00px;top:871.79px;font-size:26px;line-height:26px;color:#202124;font-weight:400;letter-spacing:-0.024px;">Check the status of your dataset to see if you're ready for</div><div class="t" style="left:4330.00px;top:910.99px;font-size:26px;line-height:26px;color:#202124;font-weight:400;letter-spacing:0.000px;">training</div><div class="r" style="left:4330px;top:976px;width:276px;height:64px;background:#fff;border-radius:8px;box-shadow:0 1px 4px rgba(0,0,0,.3)"></div><div class="t" style="left:4355.00px;top:995.41px;font-size:25.5px;line-height:25.5px;color:#3461cc;font-weight:400;-webkit-text-stroke:0.6px #3461cc;letter-spacing:0.000px;;transform:scaleX(0.9619);transform-origin:0 0">VIEW LABEL STATS</div>
</body></html>
